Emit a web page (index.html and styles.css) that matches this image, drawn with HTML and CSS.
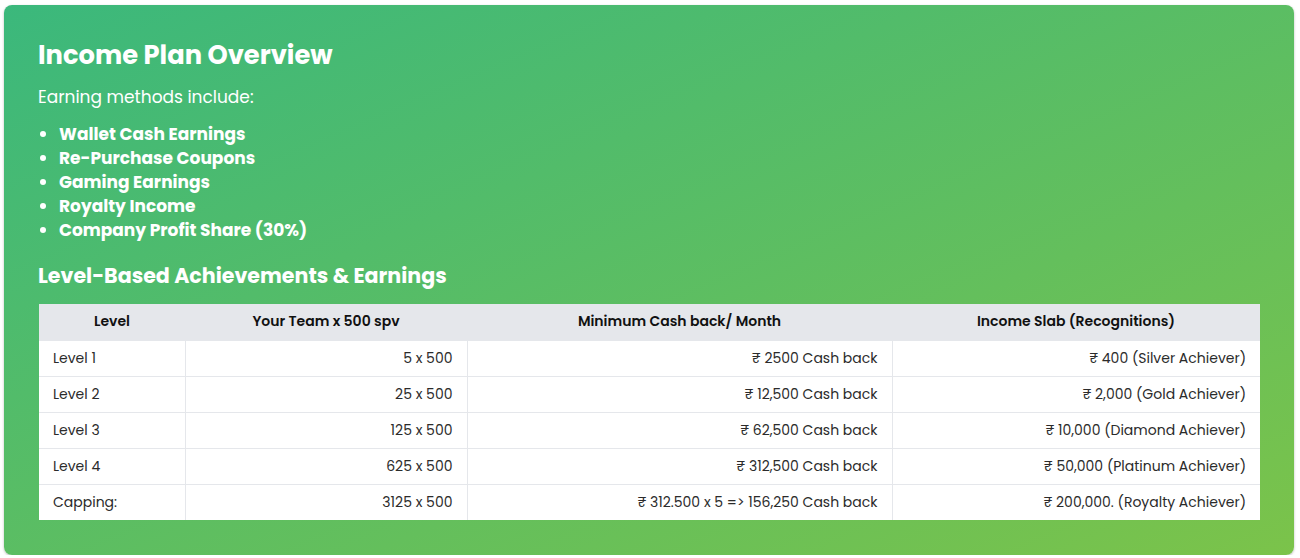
FILE: index.html
```html
<!DOCTYPE html>
<html lang="en">
<head>
<meta charset="utf-8">
<title>Income Plan Overview</title>
<link rel="stylesheet" href="styles.css">
</head>
<body>
<section class="card">
  <h2 class="title">Income Plan Overview</h2>
  <p class="intro">Earning methods include:</p>
  <ul class="methods">
    <li>Wallet Cash Earnings</li>
    <li>Re-Purchase Coupons</li>
    <li>Gaming Earnings</li>
    <li>Royalty Income</li>
    <li>Company Profit Share (30%)</li>
  </ul>
  <h3 class="subtitle">Level-Based Achievements &amp; Earnings</h3>
  <table class="levels">
    <colgroup>
      <col class="c1"><col class="c2"><col class="c3"><col class="c4">
    </colgroup>
    <thead>
      <tr>
        <th>Level</th>
        <th>Your Team x 500 spv</th>
        <th>Minimum Cash back/ Month</th>
        <th>Income Slab (Recognitions)</th>
      </tr>
    </thead>
    <tbody>
      <tr><td>Level 1</td><td class="num">5 x 500</td><td class="num">₹ 2500 Cash back</td><td class="num">₹ 400 (Silver Achiever)</td></tr>
      <tr><td>Level 2</td><td class="num">25 x 500</td><td class="num">₹ 12,500 Cash back</td><td class="num">₹ 2,000 (Gold Achiever)</td></tr>
      <tr><td>Level 3</td><td class="num">125 x 500</td><td class="num">₹ 62,500 Cash back</td><td class="num">₹ 10,000 (Diamond Achiever)</td></tr>
      <tr><td>Level 4</td><td class="num">625 x 500</td><td class="num">₹ 312,500 Cash back</td><td class="num">₹ 50,000 (Platinum Achiever)</td></tr>
      <tr><td>Capping:</td><td class="num">3125 x 500</td><td class="num">₹ 312.500 x 5 =&gt; 156,250 Cash back</td><td class="num">₹ 200,000. (Royalty Achiever)</td></tr>
    </tbody>
  </table>
</section>
</body>
</html>
```

FILE: styles.css
```css
* { box-sizing: border-box; }
html, body { margin: 0; padding: 0; }
body {
  background: #ffffff;
  font-family: Poppins, Inter, "Liberation Sans", sans-serif;
  padding: 5px 6px 0 4px;
}
.card {
  height: 550px;
  border-radius: 8px;
  background: linear-gradient(to bottom right, #3bb87c, #7bc34a);
  box-shadow: 0 1px 3px rgba(0,0,0,0.18), 0 1px 2px rgba(0,0,0,0.1);
  padding: 34px 35px 35px 34px;
  color: #ffffff;
}
.title {
  margin: 0;
  font-size: 25.75px;
  line-height: 32px;
  font-weight: 700;
}
.intro {
  margin: 14px 0 0;
  font-size: 17px;
  line-height: 24px;
  font-weight: 400;
}
.methods {
  margin: 13px 0 0;
  padding-left: 21px;
  font-size: 17px;
  line-height: 24px;
  font-weight: 700;
}
.subtitle {
  margin: 20px 0 0;
  font-size: 20.6px;
  line-height: 28px;
  font-weight: 700;
}
.levels {
  margin-top: 14px;
  width: 1221px;
  margin-left: 1px;
  border-collapse: collapse;
  background: #ffffff;
  color: #222222;
  font-size: 14px;
  table-layout: fixed;
}
.c1 { width: 146px; }
.c2 { width: 282px; }
.c3 { width: 425px; }
.c4 { width: 368px; }
.levels th {
  background: #e5e7eb;
  font-weight: 600;
  height: 36px;
  padding: 0 15px;
  text-align: center;
  color: #111111;
  font-size: 14px;
}
.levels td {
  height: 36px;
  padding: 0 14px;
  border: 1px solid #e5e7eb;
  font-size: 14px;
  color: #2b2b2b;
}
.levels tr td:first-child { border-left: none; }
.levels tr td:last-child { border-right: none; }
.levels tbody tr:last-child td { border-bottom: none; }
.levels td.num { text-align: right; }
```
